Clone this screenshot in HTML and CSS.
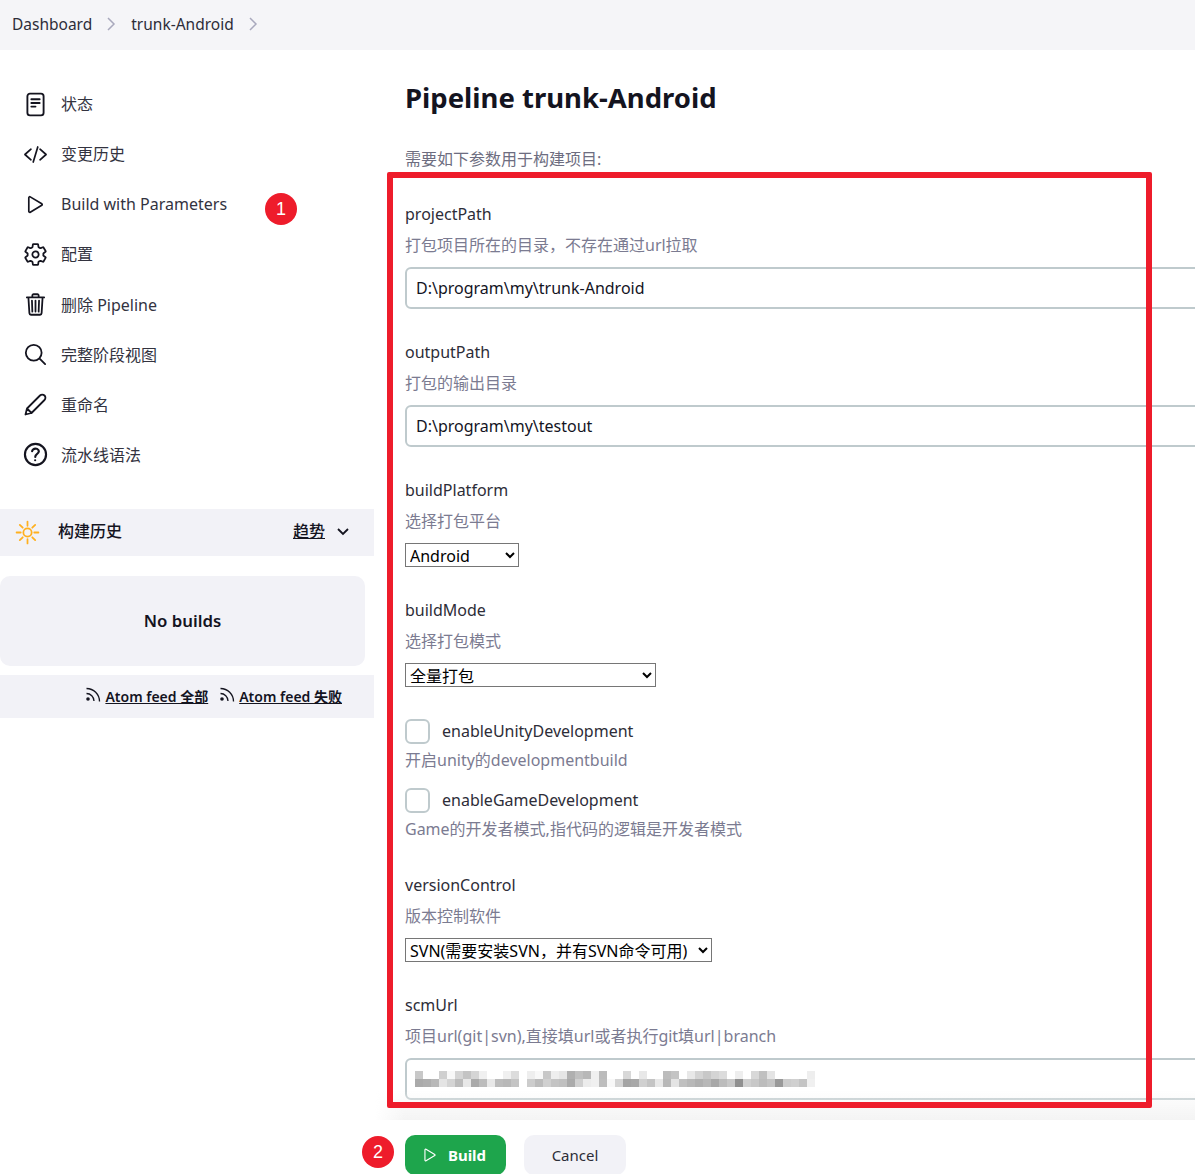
FILE: index.html
```html
<!DOCTYPE html>
<html lang="zh">
<head>
<meta charset="utf-8">
<title>Pipeline trunk-Android</title>
<link rel="stylesheet" href="styles.css">
</head>
<body>
<nav class="crumbs">
  <a class="crumb">Dashboard</a>
  <svg class="crumb-sep" viewBox="0 0 10 16"><path d="M2 2l6 6-6 6"/></svg>
  <a class="crumb">trunk-Android</a>
  <svg class="crumb-sep" viewBox="0 0 10 16"><path d="M2 2l6 6-6 6"/></svg>
</nav>
<div class="layout">
  <aside class="side">
    <ul class="tasks">
      <li class="task"><svg class="ico" viewBox="0 0 26 26"><rect x="5.2" y="2.5" width="15.600" height="21" rx="2.500" class="thin"/><path d="M9 8h8M9 11.500h8M9 15h4" class="thin"/></svg><span>状态</span></li>
      <li class="task"><svg class="ico" viewBox="-30 -30 572 572"><path d="M160 368L32 256l128-112M352 368l128-112-128-112M304 96l-96 320"/></svg><span>变更历史</span></li>
      <li class="task"><svg class="ico" viewBox="-34 -34 580 580"><path d="M112 111v290c0 17.44 17 28.52 31 20.16l247.9-148.37c12.12-7.25 12.12-26.33 0-33.58L143 91.84c-14-8.36-31 2.72-31 20.16z"/></svg><span>Build with Parameters</span></li>
      <li class="task"><svg class="ico" viewBox="-20 -20 552 552"><path d="M262.29 192.31a64 64 0 1057.4 57.4 64.13 64.13 0 00-57.4-57.4zM416.39 256a154.34 154.34 0 01-1.53 20.79l45.21 35.46a10.81 10.81 0 012.45 13.75l-42.77 74a10.81 10.81 0 01-13.14 4.59l-44.9-18.08a16.11 16.11 0 00-15.17 1.75A164.48 164.48 0 01325 400.8a15.94 15.94 0 00-8.82 12.14l-6.73 47.89a11.08 11.08 0 01-10.68 9.17h-85.54a11.11 11.11 0 01-10.69-8.87l-6.72-47.82a16.07 16.07 0 00-9-12.22 155.3 155.3 0 01-21.46-12.57 16 16 0 00-15.11-1.71l-44.89 18.07a10.81 10.81 0 01-13.14-4.58l-42.77-74a10.8 10.8 0 012.45-13.75l38.21-30a16.05 16.05 0 006-14.08c-.36-4.17-.58-8.33-.58-12.5s.21-8.27.58-12.35a16 16 0 00-6.07-13.94l-38.19-30A10.81 10.81 0 0149.48 186l42.77-74a10.81 10.81 0 0113.14-4.59l44.9 18.08a16.11 16.11 0 0015.17-1.75A164.48 164.48 0 01187 111.2a15.94 15.94 0 008.82-12.14l6.73-47.89A11.08 11.08 0 01213.23 42h85.54a11.11 11.11 0 0110.69 8.87l6.72 47.82a16.07 16.07 0 009 12.22 155.3 155.3 0 0121.46 12.57 16 16 0 0015.11 1.71l44.89-18.07a10.81 10.81 0 0113.14 4.58l42.77 74a10.8 10.8 0 01-2.45 13.75l-38.21 30a16.05 16.05 0 00-6.05 14.08c.33 4.14.55 8.3.55 12.47z"/></svg><span>配置</span></li>
      <li class="task"><svg class="ico" viewBox="-18 -18 548 548"><path d="M112 112l20 320c.95 18.49 14.4 32 32 32h184c17.67 0 30.87-13.51 32-32l20-320M80 112h352M192 112V72h0a23.93 23.93 0 0124-24h80a23.93 23.93 0 0124 24h0v40M256 176v224M184 176l8 224M328 176l-8 224"/></svg><span>删除 Pipeline</span></li>
      <li class="task"><svg class="ico" viewBox="-12 -12 537 537"><path d="M221.09 64a157.09 157.09 0 10157.09 157.09A157.1 157.1 0 00221.09 64zM338.29 338.29L448 448"/></svg><span>完整阶段视图</span></li>
      <li class="task"><svg class="ico" viewBox="0 0 27 27"><path class="thin" d="M3.500 23.500l1.500-6L18 4.500a3.180 3.180 0 014.500 4.500L9.500 22zM5 17.500l4.500 4.500"/></svg><span>重命名</span></li>
      <li class="task"><svg class="ico" viewBox="31 31 450 450"><path d="M256 80a176 176 0 10176 176A176 176 0 00256 80zM200 202.29s.84-17.5 19.57-32.57C230.68 160.77 244 158.18 256 158c10.93-.14 20.69 1.67 26.53 4.45 10 4.76 29.47 16.38 29.47 41.09 0 26-17 37.81-36.37 50.8S252 281.43 252 296"/><circle cx="250" cy="352" r="18" class="solid"/></svg><span>流水线语法</span></li>
    </ul>
    <section class="history-head">
      <svg class="sun" viewBox="0 0 26 26"><circle cx="13" cy="13" r="4"/><path d="M13 2.500v4M13 19.500v4M2.500 13h4M19.500 13h4M5.600 5.600l2.800 2.800M17.600 17.600l2.800 2.800M5.600 20.400l2.800-2.800M17.600 8.400l2.800-2.800"/></svg>
      <h2 class="history-title">构建历史</h2>
      <a class="trend">趋势</a>
      <svg class="chev" viewBox="0 0 14 10"><path d="M2 2l5 5 5-5"/></svg>
    </section>
    <div class="no-builds">No builds</div>
    <div class="feeds">
      <svg class="rss" viewBox="0 0 16 16"><circle cx="3" cy="13" r="1.800" class="solid"/><path d="M1.500 7.500a7.500 7.500 0 017.500 7.500M1.500 2.500a13 13 0 0113 13"/></svg>
      <a class="feed">Atom feed 全部</a>
      <svg class="rss rss-second" viewBox="0 0 16 16"><circle cx="3" cy="13" r="1.800" class="solid"/><path d="M1.500 7.500a7.500 7.500 0 017.500 7.500M1.500 2.500a13 13 0 0113 13"/></svg>
      <a class="feed">Atom feed 失败</a>
    </div>
  </aside>
  <main class="main">
    <h1 class="title">Pipeline trunk-Android</h1>
    <p class="intro">需要如下参数用于构建项目:</p>
    <form class="params">
      <div class="param">
        <label class="name">projectPath</label>
        <div class="hint">打包项目所在的目录，不存在通过url拉取</div>
        <input class="text" type="text" value="D:\program\my\trunk-Android">
      </div>
      <div class="param">
        <label class="name">outputPath</label>
        <div class="hint">打包的输出目录</div>
        <input class="text" type="text" value="D:\program\my\testout">
      </div>
      <div class="param">
        <label class="name">buildPlatform</label>
        <div class="hint">选择打包平台</div>
        <select class="sel sel-platform"><option>Android</option></select>
      </div>
      <div class="param">
        <label class="name">buildMode</label>
        <div class="hint">选择打包模式</div>
        <select class="sel sel-mode"><option>全量打包</option></select>
      </div>
      <div class="param-check param-check-first">
        <label class="check"><span class="box"></span><span class="check-name">enableUnityDevelopment</span></label>
        <div class="check-hint">开启unity的developmentbuild</div>
      </div>
      <div class="param-check">
        <label class="check"><span class="box"></span><span class="check-name">enableGameDevelopment</span></label>
        <div class="check-hint">Game的开发者模式,指代码的逻辑是开发者模式</div>
      </div>
      <div class="param param-version">
        <label class="name">versionControl</label>
        <div class="hint">版本控制软件</div>
        <select class="sel sel-version"><option>SVN(需要安装SVN，并有SVN命令可用)</option></select>
      </div>
      <div class="param param-scm">
        <label class="name">scmUrl</label>
        <div class="hint">项目url(git|svn),直接填url或者执行git填url|branch</div>
        <div class="text masked">
          <svg class="mosaic" width="408" height="16" viewBox="0 0 408 16" shape-rendering="crispEdges">
            <g>
              <rect x="0" width="8" height="8" fill="#c8c8c8"/><rect x="24" width="8" height="8" fill="#cfcfcf"/><rect x="32" width="8" height="8" fill="#f8f8f8"/><rect x="40" width="8" height="8" fill="#d5d5d5"/><rect x="48" width="8" height="8" fill="#c4c4c4"/><rect x="56" width="8" height="8" fill="#d5d5d5"/><rect x="64" width="8" height="8" fill="#f0f0f0"/><rect x="88" width="8" height="8" fill="#f0f0f0"/><rect x="96" width="8" height="8" fill="#dcdcdc"/><rect x="112" width="8" height="8" fill="#eeeeee"/><rect x="120" width="8" height="8" fill="#f8f8f8"/><rect x="128" width="8" height="8" fill="#c8c8c8"/><rect x="136" width="8" height="8" fill="#eeeeee"/><rect x="144" width="8" height="8" fill="#e6e6e6"/><rect x="152" width="8" height="8" fill="#b0b0b0"/><rect x="160" width="8" height="8" fill="#c0c0c0"/><rect x="168" width="8" height="8" fill="#b8b8b8"/><rect x="176" width="8" height="8" fill="#f0f0f0"/><rect x="184" width="8" height="8" fill="#bbbbbb"/>
              <rect x="208" width="8" height="8" fill="#d8d8d8"/><rect x="224" width="8" height="8" fill="#e8e8e8"/><rect x="248" width="8" height="8" fill="#bcbcbc"/><rect x="256" width="8" height="8" fill="#c4c4c4"/><rect x="272" width="8" height="8" fill="#e8e8e8"/><rect x="280" width="8" height="8" fill="#d4d4d4"/><rect x="288" width="8" height="8" fill="#c8c8c8"/><rect x="296" width="8" height="8" fill="#d4d4d4"/><rect x="304" width="8" height="8" fill="#dcdcdc"/><rect x="320" width="8" height="8" fill="#eeeeee"/><rect x="336" width="8" height="8" fill="#d8d8d8"/><rect x="344" width="8" height="8" fill="#c0c0c0"/><rect x="352" width="8" height="8" fill="#e4e4e4"/><rect x="392" width="8" height="8" fill="#eeeeee"/>
            </g>
            <g>
              <rect x="0" y="8" width="8" height="8" fill="#aaaaaa"/><rect x="8" y="8" width="8" height="8" fill="#aeaeae"/><rect x="16" y="8" width="8" height="8" fill="#b8b8b8"/><rect x="24" y="8" width="8" height="8" fill="#e4e4e4"/><rect x="32" y="8" width="8" height="8" fill="#d4d4d4"/><rect x="40" y="8" width="8" height="8" fill="#bcbcbc"/><rect x="48" y="8" width="8" height="8" fill="#e8e8e8"/><rect x="56" y="8" width="8" height="8" fill="#aaaaaa"/><rect x="64" y="8" width="8" height="8" fill="#bcbcbc"/><rect x="72" y="8" width="8" height="8" fill="#e8e8e8"/><rect x="80" y="8" width="8" height="8" fill="#bcbcbc"/><rect x="88" y="8" width="8" height="8" fill="#b8b8b8"/><rect x="96" y="8" width="8" height="8" fill="#c4c4c4"/><rect x="112" y="8" width="8" height="8" fill="#cccccc"/><rect x="120" y="8" width="8" height="8" fill="#bcbcbc"/><rect x="128" y="8" width="8" height="8" fill="#d0d0d0"/><rect x="136" y="8" width="8" height="8" fill="#c4c4c4"/><rect x="144" y="8" width="8" height="8" fill="#c0c0c0"/><rect x="152" y="8" width="8" height="8" fill="#aaaaaa"/><rect x="160" y="8" width="8" height="8" fill="#d0d0d0"/><rect x="168" y="8" width="8" height="8" fill="#ececec"/><rect x="176" y="8" width="8" height="8" fill="#f0f0f0"/><rect x="184" y="8" width="8" height="8" fill="#bdbdbd"/><rect x="192" y="8" width="8" height="8" fill="#f8f8f8"/>
              <rect x="200" y="8" width="8" height="8" fill="#d4d4d4"/><rect x="208" y="8" width="8" height="8" fill="#a4a4a4"/><rect x="216" y="8" width="8" height="8" fill="#a8a8a8"/><rect x="224" y="8" width="8" height="8" fill="#d0d0d0"/><rect x="232" y="8" width="8" height="8" fill="#c4c4c4"/><rect x="240" y="8" width="8" height="8" fill="#e8e8e8"/><rect x="248" y="8" width="8" height="8" fill="#b8b8b8"/><rect x="256" y="8" width="8" height="8" fill="#e4e4e4"/><rect x="264" y="8" width="8" height="8" fill="#c0c0c0"/><rect x="272" y="8" width="8" height="8" fill="#b8b8b8"/><rect x="280" y="8" width="8" height="8" fill="#b0b0b0"/><rect x="288" y="8" width="8" height="8" fill="#b8b8b8"/><rect x="296" y="8" width="8" height="8" fill="#a8a8a8"/><rect x="304" y="8" width="8" height="8" fill="#bcbcbc"/><rect x="312" y="8" width="8" height="8" fill="#c8c8c8"/><rect x="320" y="8" width="8" height="8" fill="#909090"/><rect x="328" y="8" width="8" height="8" fill="#d0d0d0"/><rect x="336" y="8" width="8" height="8" fill="#c8c8c8"/><rect x="344" y="8" width="8" height="8" fill="#bcbcbc"/><rect x="352" y="8" width="8" height="8" fill="#c4c4c4"/><rect x="360" y="8" width="8" height="8" fill="#999999"/><rect x="368" y="8" width="8" height="8" fill="#cccccc"/><rect x="376" y="8" width="8" height="8" fill="#d0d0d0"/><rect x="384" y="8" width="8" height="8" fill="#c4c4c4"/><rect x="392" y="8" width="8" height="8" fill="#f0f0f0"/>
            </g>
          </svg>
        </div>
      </div>
    </form>
    <div class="actions">
      <button class="btn btn-build" type="button"><svg class="btn-ico" viewBox="0 0 512 512"><path d="M112 111v290c0 17.44 17 28.52 31 20.16l247.9-148.37c12.12-7.25 12.12-26.33 0-33.58L143 91.84c-14-8.36-31 2.72-31 20.16z"/></svg>Build</button>
      <button class="btn btn-cancel" type="button">Cancel</button>
    </div>
  </main>
</div>
<div class="mark-box"></div>
<div class="badge badge-1">1</div>
<div class="badge badge-2">2</div>
</body>
</html>
```
FILE: styles.css
```css
* { box-sizing: border-box; }
html, body { margin: 0; padding: 0; }
body {
  position: relative;
  width: 1195px;
  height: 1174px;
  overflow: hidden;
  background: #fff;
  color: #14141f;
  font: 16px/24px "Noto Sans", "Noto Sans CJK SC", sans-serif;
}
.crumbs {
  display: flex;
  align-items: center;
  height: 50px;
  padding: 0 0 2px 12px;
  background: #f5f5f8;
  color: #2d2d38;
  font-size: 15.500px;
}
.crumb-sep { width: 10px; height: 16px; margin: 0 15px 0 14px; }
.crumb-sep path { fill: none; stroke: #a9a9bd; stroke-width: 1.500; }
.layout { display: flex; }
.side { flex: 0 0 374px; }
.tasks { list-style: none; margin: 0; padding: 29px 0 0; }
.task {
  display: flex;
  align-items: center;
  height: 50.140px;
  padding-left: 22px;
  color: #33333f;
}
.ico { flex: 0 0 27px; width: 27px; height: 27px; margin-right: 12px; }
.ico path, .ico rect { fill: none; stroke: #14141f; stroke-width: 36; stroke-linecap: round; stroke-linejoin: round; }
.ico .thin { stroke-width: 1.800; }
.ico .solid { fill: #14141f; }
.history-head {
  display: flex;
  align-items: center;
  height: 47px;
  margin-top: 28.500px;
  padding: 0 24px 0 14px;
  background: #f2f2f7;
}
.sun { width: 27px; height: 27px; margin-right: 17px; }
.sun circle, .sun path { fill: none; stroke: #ffb01f; stroke-width: 1.700; stroke-linecap: round; }
.history-title { flex: 1; margin: 0 0 2px; font-size: 16px; font-weight: 500; color: #14141f; }
.trend { margin-bottom: 2px; text-decoration: underline; font-weight: 500; }
.chev { width: 14px; height: 10px; margin-left: 11px; }
.chev path { fill: none; stroke: #14141f; stroke-width: 1.800; }
.no-builds {
  display: flex;
  align-items: center;
  justify-content: center;
  width: 365px;
  height: 90px;
  margin-top: 20px;
  border-radius: 10px;
  background: #f2f2f7;
  font-size: 16.800px;
  font-weight: 600;
}
.feeds {
  display: flex;
  align-items: center;
  justify-content: flex-end;
  height: 43px;
  margin-top: 9px;
  padding: 2px 32px 0 0;
  background: #f2f2f7;
  font-size: 14px;
  font-weight: 600;
}
.rss { width: 16px; height: 16px; margin: -6px 4px 0 0; }
.rss-second { margin-left: 11px; }
.rss path { fill: none; stroke: #14141f; stroke-width: 1.300; }
.rss .solid { fill: #14141f; }
.feed { text-decoration: underline; }
.main { flex: 1; min-width: 0; padding-left: 31px; }
.title { margin: 26px 0 0; font-size: 27.500px; line-height: 44px; font-weight: 700; color: #14141f; }
.intro { margin: 27px 0 0; color: #6d6d80; }
.params { display: flex; flex-direction: column; }
.param { display: flex; flex-direction: column; align-items: flex-start; padding-top: 31px; }
.name { line-height: 24px; color: #2d2d38; }
.hint { margin-top: 7px; color: #7b7b91; line-height: 24px; }
.text {
  width: 1000px;
  height: 42px;
  margin: 10px 0 0;
  padding: 0 9px;
  border: 2px solid #bfcacd;
  border-radius: 6px;
  background: #fff;
  color: #14141f;
  font: inherit;
}
.masked { display: flex; align-items: center; }
.mosaic { display: block; margin-left: -1px; }
.sel {
  height: 24px;
  margin-top: 10px;
  padding: 0;
  border: 1px solid #767676;
  border-radius: 0;
  background: #fff;
  color: #000;
  font: 16px "Noto Sans", "Noto Sans CJK SC", sans-serif;
}
.sel-platform { width: 114px; }
.sel-mode { width: 251px; }
.sel-version { width: 307px; }
.param-check { display: flex; flex-direction: column; margin-top: 16px; }
.param-check-first { margin-top: 32px; }
.check { display: flex; align-items: center; height: 25px; color: #2d2d38; }
.check-name { margin-bottom: 2px; }
.box { width: 25px; height: 25px; margin-right: 12px; border: 2px solid #bfcacd; border-radius: 6px; background: #fff; }
.check-hint { margin-top: 4px; color: #7b7b91; line-height: 24px; }
.param-version { padding-top: 32px; }
.param-scm { padding-top: 31px; }
.actions { position: relative; display: flex; gap: 18px; margin-top: 35px; }
.actions::before {
  content: "";
  position: absolute;
  top: -45px;
  left: -30px;
  width: 1000px;
  height: 30px;
  background: linear-gradient(to bottom, rgba(244,244,244,0), #f4f4f4);
  -webkit-mask-image: linear-gradient(to right, transparent, #000 30px);
  mask-image: linear-gradient(to right, transparent, #000 30px);
}
.btn { display: flex; align-items: center; justify-content: center; height: 40px; border: 0; border-radius: 10px; font: inherit; font-size: 15px; }
.btn-build { width: 101px; padding-left: 2px; background: #1ea54c; color: #fff; font-weight: 700; }
.btn-ico { width: 18px; height: 18px; margin-right: 9px; }
.btn-ico path { fill: none; stroke: #fff; stroke-width: 32; stroke-linejoin: round; }
.btn-cancel { width: 102px; background: #f2f2f7; color: #2d2d38; }
.mark-box {
  position: absolute;
  left: 387px;
  top: 172px;
  width: 765px;
  height: 936px;
  border: 6px solid #ee1c2b;
  border-radius: 2px;
}
.badge {
  position: absolute;
  width: 32px;
  height: 32px;
  border-radius: 50%;
  background: #ee1c2b;
  color: #fff;
  font: 18px/32px "Liberation Sans", sans-serif;
  text-align: center;
}
.badge-1 { left: 265px; top: 193px; }
.badge-2 { left: 362px; top: 1136px; }
```
